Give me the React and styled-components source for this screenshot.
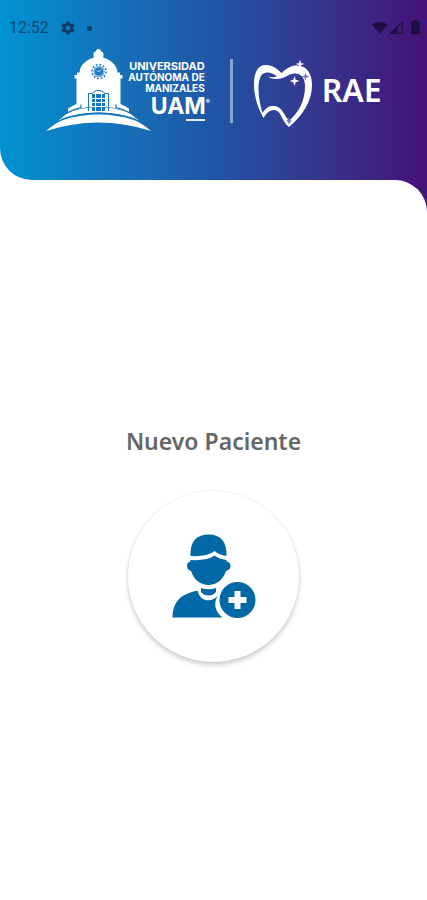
import React from "react";
import styled, { createGlobalStyle } from "styled-components";

const GlobalStyle = createGlobalStyle`
  *, *::before, *::after { box-sizing: border-box; }
  body { margin: 0; background: #fff; }
`;

const brandGradient =
  "linear-gradient(90deg, #0092d2 0%, #1670b8 28%, #2156a6 50%, #36348c 75%, #451277 100%)";

const Screen = styled.div`
  display: flex;
  flex-direction: column;
  min-height: 100vh;
  background: #fff;
`;

const Header = styled.header`
  display: flex;
  flex-direction: column;
  padding-bottom: 48px;
  background: ${brandGradient};
  border-bottom-left-radius: 32px;
`;

const StatusBar = styled.div`
  display: flex;
  align-items: center;
  justify-content: space-between;
  height: 48px;
  padding: 8px 5px 0 9px;
`;

const StatusGroup = styled.div`
  display: flex;
  align-items: center;
  gap: ${(p) => p.$gap}px;
`;

const Clock = styled.time`
  font: 400 16px/20px Roboto, sans-serif;
  color: #0d4a75;
`;

const Dot = styled.span`
  width: 5px;
  height: 5px;
  border-radius: 50%;
  background: #123a62;
`;

const Brand = styled.div`
  display: flex;
  align-items: center;
  justify-content: center;
  height: 84px;
`;

const University = styled.div`
  display: flex;
  align-items: center;
`;

const UniversityText = styled.div`
  display: flex;
  flex-direction: column;
  align-items: flex-end;
  margin-left: -25px;
  padding-top: 2px;
  color: #fff;
  font-family: Inter, sans-serif;
`;

const UniversityLine = styled.div`
  font-size: ${(p) => (p.$wide ? 11 : 10)}px;
  font-weight: 700;
  line-height: 11px;
  text-align: right;
  white-space: nowrap;
`;

const Acronym = styled.div`
  display: flex;
  align-items: flex-start;
  margin-right: -5px;
  font-size: 23px;
  font-weight: 700;
  line-height: 25px;
`;

const Registered = styled.span`
  padding-top: 4px;
  font-size: 6px;
  line-height: 8px;
`;

const Underline = styled.span`
  width: 19px;
  height: 2px;
  background: #e4ecf7;
`;

const Divider = styled.span`
  width: 3px;
  height: 64px;
  margin: 2px 19px 0 25px;
  background: #8aa4d4;
`;

const ToothName = styled.span`
  margin-left: 8px;
  color: #fff;
  font: 600 32px/40px "Noto Sans", sans-serif;
`;

const PanelBackdrop = styled.div`
  display: flex;
  flex: 1;
  background: ${brandGradient};
`;

const Panel = styled.main`
  display: flex;
  flex: 1;
  flex-direction: column;
  align-items: center;
  justify-content: center;
  gap: 34px;
  padding: 6px 16px 0;
  background: #fff;
  border-top-right-radius: 32px;
`;

const Title = styled.h1`
  margin: 0;
  color: #666;
  font: 600 23px/32px "Noto Sans", sans-serif;
`;

const RoundButton = styled.button`
  display: flex;
  align-items: center;
  justify-content: center;
  width: 171px;
  height: 171px;
  padding: 0;
  border: 0;
  border-radius: 50%;
  background: #fff;
  box-shadow: 0 3px 5px rgba(0, 0, 0, 0.2), 0 0 3px rgba(0, 0, 0, 0.06);
  cursor: pointer;
`;

const Drawing = styled.svg`
  display: block;
  flex: none;
`;

function GearIcon() {
  return (
    <Drawing width="16" height="16" viewBox="0 0 24 24" aria-hidden="true">
      <path
        fill="#123a62"
        d="M19.400 13c.1-.3.1-.7.1-1s0-.7-.1-1l2.100-1.600c.2-.2.3-.4.1-.7l-2-3.400c-.1-.2-.4-.3-.6-.2l-2.500 1a7 7 0 0 0-1.700-1l-.4-2.600c0-.3-.2-.4-.5-.4h-4c-.3 0-.5.2-.5.4l-.4 2.600c-.6.3-1.200.6-1.700 1l-2.500-1c-.2-.1-.5 0-.6.2l-2 3.400c-.1.2-.1.500.1.700L4.600 11c0 .3-.1.700-.1 1s0 .7.1 1l-2.100 1.600c-.2.200-.3.400-.1.700l2 3.400c.1.200.4.300.6.200l2.500-1c.5.400 1.100.7 1.700 1l.4 2.600c0 .300.200.400.5.400h4c.3 0 .5-.2.5-.4l.4-2.600c.6-.3 1.200-.6 1.700-1l2.500 1c.2.100.5 0 .6-.2l2-3.400c.1-.2.100-.5-.1-.7zM12 15.500a3.500 3.500 0 1 1 0-7 3.500 3.500 0 0 1 0 7z"
      />
    </Drawing>
  );
}

function DeviceIcons() {
  return (
    <Drawing width="50" height="16" viewBox="0 0 50 16" aria-hidden="true">
      <g fill="#1c0f42">
        <path d="M0 4.500Q8-1 15.500 4.500L8 13.500z" />
        <path d="M17 14 31 1v13zm8.500-1.200h4.300V4l-4.300 4z" fillRule="evenodd" />
        <path d="M41 1.500V0h4.500v1.500h2V14h-8.500V1.500z" />
      </g>
    </Drawing>
  );
}

function TowerLogo() {
  return (
    <Drawing width="108" height="84" viewBox="44 48 108 84" aria-hidden="true">
      <path
        fill="#fff"
        d="M93 57.500C91.500 54 93 51.500 95 51.500Q95 49 97.500 49T100 51.500C102 51.500 103.500 54 102 57.500C110 60 116 65 116.500 72.500H119V75H121.500V78.500H119.500V104Q124 106 128 108.500V112Q113 106.500 97.500 106.500T67 112V108.500Q71 106 75.500 104V78.500H73.500V75H76V72.500H78.500C79 65 85 60 93 57.500z"
      />
      <path fill="#fff" d="M57.500 120.500L66 113.500Q80 107 97.500 107T129 113.500L138 120.500Q118 112.500 97.500 112.500T57.500 120.500z" />
      <path fill="#fff" d="M45 131Q55 122.500 62 120Q79 114.500 97.500 114.500T133 120Q140 122.500 150 131Q124 122.500 97.500 122.500T45 131z" />
      <path fill="none" stroke="#1474bd" strokeWidth="1.200" d="M60 119.500Q77 113 97.500 113T135.500 119.500" />
      <path fill="none" stroke="#1474bd" strokeWidth="1.200" d="M65 113.500Q72 109 80 107.500V104.500M130 113.500Q123 109 115 107.500V104.500" />
      <circle cx="98" cy="71.500" r="5.500" fill="#2279bd" />
      <circle cx="98" cy="71.500" r="7" fill="none" stroke="#2279bd" strokeWidth="1.500" strokeDasharray="2 1.660" />
      <circle cx="98" cy="71.500" r="4.700" fill="none" stroke="#fff" strokeWidth="1" opacity=".55" />
      <path d="M96 70.500l1.500 1.500 2.500-2.500" fill="none" stroke="#fff" strokeWidth="1" opacity=".8" />
      <path d="M87.500 111V93.500H91Q97.500 87 104 93.500H107.500V111" fill="none" stroke="#1975bd" strokeWidth="1" />
      <path d="M91 94H104V111H91z" fill="#1975bd" />
      <path d="M94.500 94V111M100.500 94V111M91 98.500H104M91 102.500H104M91 106.500H104" stroke="#fff" strokeWidth="1" />
    </Drawing>
  );
}

function ToothLogo() {
  return (
    <Drawing width="62" height="76" viewBox="252 52 62 76" aria-hidden="true">
      <path
        fill="#fff"
        fillRule="evenodd"
        d="M263.500 118C258 108 254 97 254 84C254 72 258 65 266 65C273 65 277 69 281.500 73C287 68 291 65.500 297 65.500C307 65.500 312 74 312 85C312 101 303 115 289 127C284 123 282 117 279.500 113C275 107.500 268 110 263.500 118z
        M262.500 113C266 107 270 105.500 275 106C282 107 284 115 289 121C299 112 305 101 305 86C305 77 300 73 294 73.500C288 74 284 79 277 79C272 79 269 77.500 268 76.500Q273 78 277 76.500C272 72.500 267 71 262.500 74C256.500 80 258 97 262.500 113z"
      />
      <path fill="#fff" d="M300 59.500l1 3.500 3.500 1-3.500 1-1 3.500-1-3.500-3.500-1 3.500-1zM294.500 76l1.200 3.800 3.800 1.200-3.800 1.200-1.200 3.800-1.200-3.800-3.800-1.200 3.800-1.200z" />
      <path fill="#6c76ba" d="M305.500 72.500l1 3 3 1-3 1-1 3-1-3-3-1 3-1zM289 117l1 3 2 1-2 1-1 3-1-3-2-1 2-1z" />
    </Drawing>
  );
}

function NewPatientIcon() {
  return (
    <Drawing width="84" height="84" viewBox="172 534 84 84" aria-hidden="true">
      <g fill="#0369a6">
        <path d="M190.500 556C190 542 196 534.500 208.500 534.500C221 534.500 227 542 226.500 556Q219 555 214.500 551Q208 557 190.500 556z" />
        <path d="M190.500 560Q207 561 214.500 555.500Q219 559 226.500 560V561.500Q230.500 562 230.500 566T226 571C223 580 216 585 208.500 585S194 580 191 571Q187 570 187 566T190.500 561.500z" />
        <path d="M201 588Q208.500 590.500 216 588V592Q213 595.500 208.500 595.500T201 592z" />
        <path d="M172.500 617.500C173 601 181 594 197.500 590.500C200 602 212 603 218 595.500C213 603 215 612 222.500 617.500z" />
        <circle cx="237.500" cy="600" r="18" />
      </g>
      <path fill="#fff" d="M234.500 591h6v6h6v6h-6v6h-6v-6h-6v-6h6z" />
    </Drawing>
  );
}

export default function App() {
  return (
    <>
      <GlobalStyle />
      <Screen>
        <Header>
          <StatusBar>
            <StatusGroup $gap={11}>
              <Clock>12:52</Clock>
              <GearIcon />
              <Dot />
            </StatusGroup>
            <DeviceIcons />
          </StatusBar>
          <Brand>
            <University>
              <TowerLogo />
              <UniversityText>
                <UniversityLine $wide>UNIVERSIDAD</UniversityLine>
                <UniversityLine>AUTÓNOMA DE</UniversityLine>
                <UniversityLine>MANIZALES</UniversityLine>
                <Acronym>
                  UAM<Registered>®</Registered>
                </Acronym>
                <Underline />
              </UniversityText>
            </University>
            <Divider />
            <ToothLogo />
            <ToothName>RAE</ToothName>
          </Brand>
        </Header>
        <PanelBackdrop>
          <Panel>
            <Title id="new-patient">Nuevo Paciente</Title>
            <RoundButton type="button" aria-labelledby="new-patient">
              <NewPatientIcon />
            </RoundButton>
          </Panel>
        </PanelBackdrop>
      </Screen>
    </>
  );
}
